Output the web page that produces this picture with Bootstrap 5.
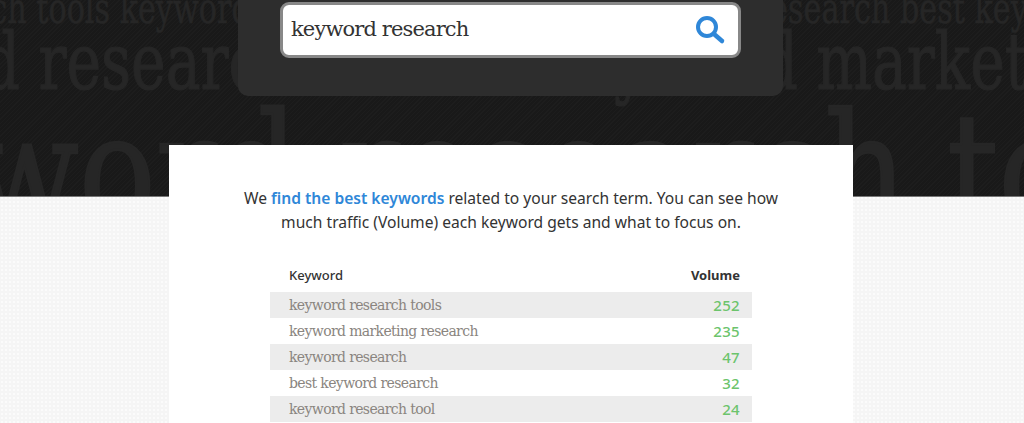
<!DOCTYPE html>
<html lang="en">
<head>
<meta charset="utf-8">
<title>Keyword research</title>
<link href="https://cdn.jsdelivr.net/npm/bootstrap@5.3.0/dist/css/bootstrap.min.css" rel="stylesheet">
<style>
html,body{height:423px;overflow:hidden}
body{background-color:#f5f5f5;background-image:radial-gradient(#fbfbfb 1px,transparent 1px);background-size:4px 4px;font-family:"Noto Sans",sans-serif;color:#333}
.hero{height:197px;background-color:#191919;background-image:repeating-linear-gradient(135deg,#1d1d1d 0 1px,transparent 1px 3px);overflow:hidden;position:relative;border-bottom:1px solid #777}
.bgword{font-family:"DejaVu Serif",serif;color:#262626;white-space:nowrap;line-height:1;transform-origin:0 50%}
.bg-a{font-size:42px;margin:-12px 0 0 -108px;transform:scaleX(.72);-webkit-text-stroke:.6px #262626}
.bg-b{font-size:78px;margin:-7px 0 0 -234px;transform:scaleX(.75);-webkit-text-stroke:1.2px #262626}
.bg-c{font-size:160px;margin:-9px 0 0 -255px;transform:scaleX(.797);-webkit-text-stroke:2.5px #262626}
.gap-a{margin-left:176px}
.gap-b{margin-left:127px}
.panel-box{position:absolute;top:-10px;left:238px;width:545px;height:106px;background:#2d2d2d;border-radius:10px}
.search-box{position:absolute;left:42px;top:12px;width:461px;height:56px;border:3px solid #888;border-radius:9px;background:#fff;padding:0 8px}
.search-text{font-family:"DejaVu Serif",serif;font-size:21px;letter-spacing:-.87px;color:#333}
.sheet{width:684px;height:278px;margin:-52px 0 0 169px;background:#fff;position:relative;padding-top:41px}
.intro{font-size:15.6px;line-height:24px;text-align:center;margin:0 auto 28px;width:560px;color:#333}
.intro b{color:#2f87d8;font-weight:600}
.kw-table{width:482px;margin:0 0 0 101px;border-collapse:collapse}
.kw-table th{font-size:13px;height:30px;padding:1px 12px 3px 19px;color:#333;font-weight:500}
.kw-table th.vol{font-weight:700}
.kw-table td{height:26px;padding:0 12px 0 19px;font-family:"DejaVu Serif",serif;font-size:14px;letter-spacing:-.63px;color:#8a8580;background:#fff}
.kw-table tr.alt td{background:#ececec}
.kw-table td.num{font-family:"Noto Sans",sans-serif;font-size:15px;letter-spacing:.3px;color:#6cc46c;text-align:right;font-weight:500}
</style>
</head>
<body>
<header class="hero">
  <div class="bgword bg-a">research tools keyword research tools keyword <span class="gap-a">research best keyword</span></div>
  <div class="bgword bg-b">keyword research tool <span class="gap-b">keyword marketing</span></div>
  <div class="bgword bg-c">keyword research tools</div>
  <div class="panel-box">
    <div class="search-box d-flex align-items-center justify-content-between">
      <span class="search-text">keyword research</span>
      <svg width="32" height="32" viewBox="0 0 32 32" class="me-1" aria-hidden="true"><circle cx="13" cy="13" r="9" fill="none" stroke="#2f87d8" stroke-width="4"/><line x1="20" y1="20" x2="28" y2="27" stroke="#2f87d8" stroke-width="4.5" stroke-linecap="round"/></svg>
    </div>
  </div>
</header>
<main class="sheet">
  <p class="intro">We <b>find the best keywords</b> related to your search term. You can see how much traffic (Volume) each keyword gets and what to focus on.</p>
  <table class="kw-table">
    <thead><tr><th>Keyword</th><th class="vol text-end">Volume</th></tr></thead>
    <tbody>
      <tr class="alt"><td>keyword research tools</td><td class="num">252</td></tr>
      <tr><td>keyword marketing research</td><td class="num">235</td></tr>
      <tr class="alt"><td>keyword research</td><td class="num">47</td></tr>
      <tr><td>best keyword research</td><td class="num">32</td></tr>
      <tr class="alt"><td>keyword research tool</td><td class="num">24</td></tr>
    </tbody>
  </table>
</main>
<script src="https://cdn.jsdelivr.net/npm/bootstrap@5.3.0/dist/js/bootstrap.bundle.min.js"></script>
</body>
</html>
